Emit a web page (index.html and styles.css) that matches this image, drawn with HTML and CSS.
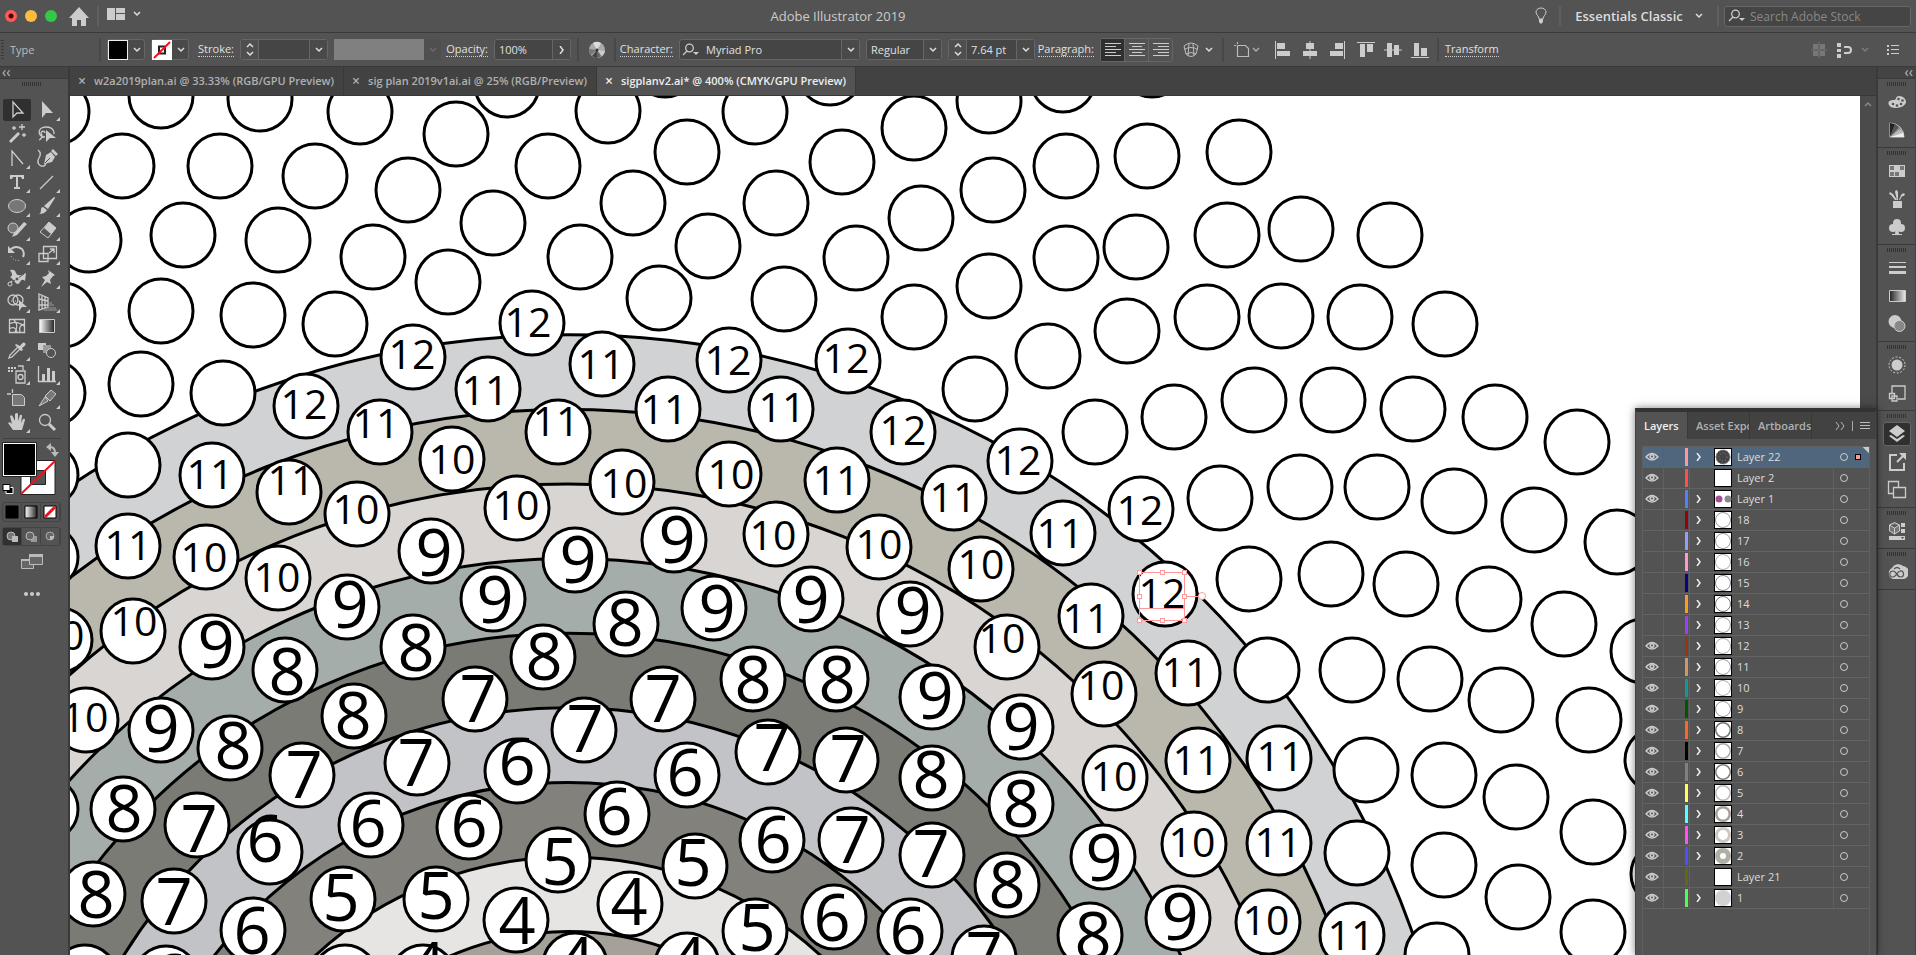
FILE: index.html
```html
<!DOCTYPE html>
<html lang="en">

<head>
    <meta charset="UTF-8">
    <meta name="viewport" content="width=device-width, initial-scale=1.0">
    <title>Adobe Illustrator 2019</title>
    <link rel="stylesheet" href="styles.css">
</head>

<body>
    <svg class="defs" width="0" height="0">
        <defs>
            <symbol id="down" viewBox="0 0 8 6"><path d="M1 1l3 3 3-3" fill="none" stroke="currentColor" stroke-width="1.5" /></symbol>
            <symbol id="up" viewBox="0 0 8 6"><path d="M1 5l3-3 3 3" fill="none" stroke="currentColor" stroke-width="1.5" /></symbol>
            <symbol id="search" viewBox="0 0 18 14"><g fill="none" stroke="currentColor" stroke-width="1.3"><circle cx="7.5" cy="5" r="3.8" /><path d="M5 8L1 12" /></g><path d="M11 9h6l-3 3z" fill="currentColor" /></symbol>
            <symbol id="eye" viewBox="0 0 14 10"><path d="M1 5q6-7 12 0q-6 6-12 0z" fill="none" stroke="currentColor" stroke-width="1.3" /><circle cx="7" cy="4.5" r="2.6" fill="currentColor" /><circle cx="7" cy="4.5" r="1" fill="#535353" /></symbol>
            <linearGradient id="fade"><stop offset="0" stop-color="#222" /><stop offset="1" stop-color="#eee" /></linearGradient>
            <linearGradient id="fade2"><stop offset="0" stop-color="#fff" /><stop offset="1" stop-color="#222" /></linearGradient>
        </defs>
    </svg>

    <header class="titlebar">
        <div class="lights"><i class="red"></i><i class="yellow"></i><i class="green"></i></div>
        <button class="home" aria-label="Home"><svg width="20" height="19"><path d="M10 0L0 11h3v8h5v-6h4v6h5v-8h3z" /></svg></button>
        <span class="sep"></span>
        <button class="arrange" aria-label="Arrange documents"><svg width="18" height="12"><path d="M0 0h8v12H0zM9 0h9v5H9zM9 6h9v6H9z" /></svg><svg class="chev"><use href="#down" /></svg></button>
        <h1>Adobe Illustrator 2019</h1>
        <button class="bulb" aria-label="Learn"><svg width="12" height="18"><path d="M4 12C4 9 1 8 1 5a5 4 0 0 1 10 0c0 3-3 4-3 7z" fill="none" stroke="#ccc" /><path d="M4 12h4v3l-2 2-2-2z" /></svg></button>
        <span class="sep"></span>
        <button class="workspace">Essentials Classic <svg class="chev"><use href="#down" /></svg></button>
        <span class="sep"></span>
        <label class="stock"><svg width="18" height="14"><use href="#search" /></svg><input type="text" placeholder="Search Adobe Stock" aria-label="Search Adobe Stock"></label>
    </header>

    <div class="control">
        <span class="vgrip"></span>
        <span class="kind">Type</span>
        <span class="sep"></span>
        <button class="swatch" aria-label="Fill"><i class="black"></i><svg class="chev"><use href="#down" /></svg></button>
        <button class="swatch" aria-label="Stroke colour"><svg width="20" height="20"><path d="M0 0h20v20H0z" fill="#fff" /><path d="M7 6.5h6v7H7z" fill="none" stroke="#222" stroke-width="2" /><path d="M2 18L18 2" stroke="#f01020" stroke-width="2" /></svg><svg class="chev"><use href="#down" /></svg></button>
        <label class="name w39" for="stroke"><span>Stroke:</span></label>
        <div class="box w88"><span class="step"><svg class="chev"><use href="#up" /></svg><svg class="chev"><use href="#down" /></svg></span><input id="stroke" type="text"><button aria-label="Stroke weights"><svg class="chev"><use href="#down" /></svg></button></div>
        <div class="profile"><i></i><svg class="chev"><use href="#down" /></svg></div>
        <label class="name w41" for="opacity"><span>Opacity:</span></label>
        <div class="box w77"><input id="opacity" type="text" value="100%"><button aria-label="Opacity slider"><svg width="6" height="8"><path d="M1 0l3 4-3 4" fill="none" stroke="#ddd" stroke-width="1.5" /></svg></button></div>
        <span class="sep"></span>
        <button class="wheel" aria-label="Recolor"><svg width="18" height="18"><circle cx="9" cy="9" r="8" fill="#aaa" /><path d="M9 9L5 2a8 8 0 0 1 8 0z" fill="#ddd" /><path d="M9 9L1 8a8 8 0 0 0 2 6z" fill="#777" /><path d="M9 9l8 1a8 8 0 0 1-3 5z" fill="#ccc" /><path d="M9 9l-5 6a8 8 0 0 0 5 2z" fill="#444" /><path d="M9 9v8a8 8 0 0 0 4-2z" fill="#666" /><circle cx="9" cy="9" r="1.5" fill="#333" /></svg></button>
        <span class="sep"></span>
        <label class="name w51" for="font"><span>Character:</span></label>
        <div class="box w181"><svg class="lens" width="18" height="14"><use href="#search" /></svg><select id="font"><option>Myriad Pro</option></select><span class="drop"><svg class="chev"><use href="#down" /></svg></span></div>
        <div class="box w76"><select aria-label="Font style"><option>Regular</option></select><span class="drop"><svg class="chev"><use href="#down" /></svg></span></div>
        <div class="box w87"><span class="step"><svg class="chev"><use href="#up" /></svg><svg class="chev"><use href="#down" /></svg></span><input type="text" value="7.64 pt" aria-label="Font size"><button aria-label="Font sizes"><svg class="chev"><use href="#down" /></svg></button></div>
        <span class="name w53"><span>Paragraph:</span></span>
        <div class="aligntext">
            <button class="on" aria-label="Align left"><svg width="16" height="14"><path d="M0 .5h16M0 3.5h11M0 6.5h16M0 9.5h11M0 12.5h16" /></svg></button>
            <button aria-label="Align center"><svg width="16" height="14"><path d="M0 .5h16M3 3.5h10M0 6.5h16M3 9.5h10M0 12.5h16" /></svg></button>
            <button aria-label="Align right"><svg width="16" height="14"><path d="M0 .5h16M5 3.5h11M0 6.5h16M5 9.5h11M0 12.5h16" /></svg></button>
        </div>
        <button class="warp" aria-label="Envelope"><svg width="16" height="16"><path d="M1 4q7-6 14 0l-2 8q-5 5-10 0zM1 7.5q7-4 14 0M3 12q5-3 10 0M6 1l-1 13M10 1l1 13" fill="none" stroke="#bbb" /></svg><svg class="chev"><use href="#down" /></svg></button>
        <span class="sep"></span>
        <button class="page" aria-label="Document"><svg width="16" height="16"><path d="M3.500 3.500h8l3 3v8h-11zM0 3.500h2M3.500 0v2" fill="none" stroke="#bbb" stroke-width="1.2" /></svg><svg class="chev"><use href="#down" /></svg></button>
        <div class="aligns">
            <button aria-label="Left"><svg width="18" height="18"><path d="M1 0h1v18H1zM3 2h8v6H3zM3 10h13v5H3z" /></svg></button>
            <button aria-label="Center"><svg width="18" height="18"><path d="M8.500 0h1v18h-1zM5 2h8v6H5zM2 10h14v5H2z" /></svg></button>
            <button aria-label="Right"><svg width="18" height="18"><path d="M16 0h1v18h-1zM7 2h8v6H7zM2 10h13v5H2z" /></svg></button>
            <button aria-label="Top"><svg width="18" height="18"><path d="M0 1h18v1H0zM3 3h5v13H3zM10 3h6v8h-6z" /></svg></button>
            <button aria-label="Middle"><svg width="18" height="18"><path d="M0 8.500h18v1H0zM3 2h5v14H3zM10 4h5v10h-5z" /></svg></button>
            <button aria-label="Bottom"><svg width="18" height="18"><path d="M0 16h18v1H0zM3 2h5v13H3zM10 7h6v8h-6z" /></svg></button>
        </div>
        <span class="sep"></span>
        <span class="name"><span>Transform</span></span>
        <span class="push"></span>
        <button class="dim" aria-label="Isolate"><svg width="16" height="16"><path d="M2 2h5v5H2zM9 2h5v5H9zM2 9h5v5H2zM9 9h5v5H9zM7.500 0h1v16h-1zM0 7.500h16v1H0z" /></svg></button>
        <button class="snap" aria-label="Snap"><svg width="16" height="16"><path d="M0 1h4v4H0zM0 7h4v3H0zM0 12h4v4H0z" /><path d="M7 5h4a3 3 0 0 1 0 6H7" fill="none" stroke="#ccc" stroke-width="2" /></svg><svg class="chev dim"><use href="#down" /></svg></button>
        <button class="more" aria-label="Menu"><svg width="12" height="10"><path d="M0 0h2v2H0zM0 4h2v2H0zM0 8h2v2H0zM4 0h8v1H4zM4 4h8v1H4zM4 8h8v1H4z" /></svg></button>
    </div>

    <div class="work">
        <aside class="tools">
            <div class="collapse">‹‹</div>
            <span class="hgrip"></span>
            <div class="toolgrid" id="toolgrid"></div>
            <svg class="paint" width="60" height="58">
                <path d="M1 .5h58" stroke="#404040" />
                <path d="M19 22.500h34v34H19z" fill="#fff" stroke="#222" />
                <path d="M28.500 32.500h15v14h-15z" fill="#535353" stroke="#222" />
                <path d="M19 56l34-33" stroke="#f01020" stroke-width="2" />
                <path d="M.5 4.500h34v34H.5z" fill="#fff" stroke="#222" />
                <path d="M2 6h31v31H2z" fill="#000" />
                <path d="M48 9q5 0 5 6" fill="none" stroke="#bbb" stroke-width="2" />
                <path d="M49 5v8l-5-4zM49 14h8l-4 5z" fill="#bbb" />
                <path d="M4 49.500h7v6H4z" fill="#000" stroke="#fff" />
                <path d="M1 46.500h7v6H1z" fill="#fff" stroke="#000" />
            </svg>
            <div class="modes">
                <button aria-label="Color"><svg width="14" height="14"><path d="M.5.5h13v13H.5z" fill="#000" /></svg></button>
                <button aria-label="Gradient"><svg width="14" height="14"><path d="M1 1h12v12H1z" fill="url(#fade2)" stroke="#000" /></svg></button>
                <button aria-label="None"><svg width="14" height="14"><path d="M1 1h12v12H1z" fill="#fff" stroke="#000" /><path d="M2 12L12 2" stroke="#f01020" stroke-width="3" /></svg></button>
            </div>
            <div class="modes draw">
                <button class="on" aria-label="Draw normal"><svg width="14" height="14"><circle cx="6" cy="6" r="4" fill="#777" stroke="#bbb" /><path d="M7 6h6v6H7z" fill="#bbb" /></svg></button>
                <button aria-label="Draw behind"><svg width="14" height="14"><path d="M7 6h6v6H7z" fill="#999" /><circle cx="6" cy="6" r="4" fill="#666" stroke="#bbb" /></svg></button>
                <button aria-label="Draw inside"><svg width="14" height="14"><circle cx="7" cy="6" r="4" fill="#666" stroke="#aaa" /><path d="M7 6h4q0 4-4 4z" fill="#bbb" /></svg></button>
            </div>
            <button class="screen" aria-label="Screen mode"><svg width="22" height="16"><g fill="#666" stroke="#bbb"><path d="M.5 5.500h12v9H.5z" /><path d="M8.500.5h13v10h-13z" /></g><path d="M8 0h14v3H8zM0 5h8v2H0z" fill="#bbb" /></svg></button>
            <button class="dots" aria-label="Edit toolbar"><i></i><i></i><i></i></button>
        </aside>

        <main class="doc">
            <nav class="tabs">
                <div class="tab"><button aria-label="Close">×</button><a href="#w2a">w2a2019plan.ai @ 33.33% (RGB/GPU Preview)</a></div>
                <div class="tab"><button aria-label="Close">×</button><a href="#sig">sig plan 2019v1ai.ai @ 25% (RGB/Preview)</a></div>
                <div class="tab active"><button aria-label="Close">×</button><a href="#sigplan">sigplanv2.ai* @ 400% (CMYK/GPU Preview)</a></div>
            </nav>
            <div class="stage">
                <svg class="artboard" id="artboard"></svg>
                <div class="scroll"><svg class="chev"><use href="#up" /></svg></div>
            </div>
        </main>

        <aside class="dock">
            <div class="collapse">‹‹</div>
            <div class="group">
                <span class="hgrip"></span>
                <button aria-label="Color"><svg width="20" height="20"><path d="M2 13C0 9 4 8 7 8s1-4 5-4 7 3 7 6-5 6-10 6c-4 0-6-1-7-3z" /><g fill="#535353"><circle cx="6" cy="12" r="1.3" /><circle cx="10" cy="13.5" r="1.3" /><circle cx="14" cy="12" r="1.3" /><circle cx="15.5" cy="8.5" r="1.3" /><circle cx="11.5" cy="7" r="1.3" /></g></svg></button>
                <button aria-label="Color guide"><svg width="20" height="20"><path d="M3 3v14h14A14 14 0 0 0 3 3z" fill="#888" stroke="#ccc" /><path d="M3 17V3l5 1z" fill="#222" /><path d="M3 17L8 4l4 3z" fill="#555" /><path d="M3 17l13-5 1 5z" fill="#eee" /><path d="M3 17l10-8 3 4z" fill="#bbb" /></svg></button>
            </div>
            <div class="group">
                <span class="hgrip"></span>
                <button aria-label="Swatches"><svg width="20" height="20"><path d="M2 4h16v12H2z" /><path d="M3 5h4v4H3zM13 5h4v4h-4zM3 11h4v4H3zM8 11h4v4H8z" fill="#777" /></svg></button>
                <button aria-label="Brushes"><svg width="20" height="20"><path d="M6 12h9v7H6zM8 11L4 6l-2-1 1-2 3 2 4 6zM10 11L8 3q1-4 3 0v8zM12 11l2-5q2-3 4-1-1 3-3 2l-2 4z" /></svg></button>
                <button aria-label="Symbols"><svg width="20" height="20"><circle cx="10" cy="6" r="4" /><circle cx="6" cy="11" r="4" /><circle cx="14" cy="11" r="4" /><path d="M9 9h2l1 8h3v1H5v-1h3z" /></svg></button>
            </div>
            <div class="group">
                <span class="hgrip"></span>
                <button aria-label="Stroke"><svg width="20" height="20"><path d="M2 4h17v1H2zM2 8h17v2H2zM2 13h17v3H2z" /></svg></button>
                <button aria-label="Gradient"><svg width="20" height="20"><path d="M2.500 4.500h16v11h-16z" fill="url(#fade)" stroke="#ccc" /></svg></button>
                <button aria-label="Transparency"><svg width="20" height="20"><circle cx="8" cy="7.5" r="6.5" /><circle cx="12.5" cy="12" r="5.5" fill="#888" stroke="#ccc" /></svg></button>
            </div>
            <div class="group">
                <span class="hgrip"></span>
                <button aria-label="Appearance"><svg width="20" height="20"><circle cx="10" cy="10" r="5.5" /><circle cx="10" cy="10" r="8" fill="none" stroke="#ccc" stroke-dasharray="2 1.600" /></svg></button>
                <button aria-label="Graphic styles"><svg width="20" height="20"><path d="M5 10V3h13v13h-7M2.500 10.500h5v5h-5zM5 13h5v5H5z" fill="none" stroke="#ccc" stroke-width="1.3" /></svg></button>
            </div>
            <div class="group">
                <span class="hgrip"></span>
                <button class="on" aria-label="Layers"><svg width="20" height="20"><path d="M10 1l8 6-8 6-8-6zM4 11l6 4 6-4 2 1-8 6-8-6z" /></svg></button>
                <button aria-label="Asset export"><svg width="20" height="20"><path d="M10 3H3v15h14v-7M10 10l7-7" fill="none" stroke="#ccc" stroke-width="2" /><path d="M12 1h7v7z" /></svg></button>
                <button aria-label="Artboards"><svg width="20" height="20"><path d="M6 13.500H1.500v-12h10V7M6.500 7.500h12v10h-12z" fill="none" stroke="#ccc" stroke-width="1.3" /></svg></button>
            </div>
            <div class="group">
                <span class="hgrip"></span>
                <button aria-label="Libraries"><svg width="20" height="20"><path d="M2.500 4l5-2.500 5 2.500v6l-5 3-5-3zM2.500 4l5 3 5-3M7.500 7v6" fill="#777" stroke="#ccc" /><path d="M14 2h4v4h-4zM14 8h4v4h-4zM2 15h16v4H2z" /><path d="M14 16h3l-1.500 2z" fill="#444" /></svg></button>
            </div>
            <div class="group">
                <span class="hgrip"></span>
                <button aria-label="Creative Cloud"><svg width="22" height="20"><path d="M7 17a6 6 0 0 1-1-11 7 7 0 0 1 11-2 6.500 6.500 0 0 1-1 13z" fill="#ccc" /><path d="M12 13L9 10a3 3 0 1 0-2 5c3 0 4-5 7-6a3 3 0 1 1 1 6c-2 0-3-1-4-2M8 7q3-3 6 0" fill="none" stroke="#555" stroke-width="1.2" /></svg></button>
            </div>
            <div class="group"></div>
        </aside>

        <section class="layers">
            <div class="ptabs">
                <button class="on">Layers</button>
                <button>Asset Export</button>
                <button>Artboards</button>
                <span class="tail"><svg width="10" height="8"><path d="M1 0l3 4-3 4M6 0l3 4-3 4" /></svg><i></i><svg width="10" height="8"><path d="M0 .5h10M0 3.500h10M0 6.500h10" /></svg></span>
            </div>
            <ul id="layerlist"></ul>
        </section>
    </div>
    <script src="script.js"></script>
</body>

</html>
```
FILE: styles.css
```css
* {
    box-sizing: border-box;
}

body {
    margin: 0;
    height: 100vh;
    display: flex;
    flex-direction: column;
    overflow: hidden;
    background-color: #535353;
    color: #ddd;
    font-family: "Open Sans", "Noto Sans", sans-serif;
    font-size: 11px;
}

button,
input,
select {
    font: inherit;
    color: inherit;
    background: none;
    border: none;
    padding: 0;
    margin: 0;
    outline: none;
    appearance: none;
}

button {
    display: flex;
    align-items: center;
    justify-content: center;
}

svg {
    display: block;
    flex: none;
    fill: #ccc;
}

.defs {
    position: absolute;
}

.chev {
    width: 8px;
    height: 6px;
    color: #ddd;
}

.dim {
    opacity: 0.3;
}

.sep {
    width: 2px;
    height: 24px;
    background-color: #484848;
    flex: none;
}

/* Title bar */
.titlebar {
    height: 33px;
    flex: none;
    display: flex;
    align-items: center;
    padding: 0 5px;
    border-bottom: 1px solid #3a3a3a;
}

.titlebar .sep {
    height: 20px;
    background-color: #5f5f5f;
}

.lights {
    display: flex;
    gap: 8px;
}

.lights i {
    width: 12px;
    height: 12px;
    border-radius: 50%;
}

.red {
    background: radial-gradient(circle, #4d0000 2px, #fc5b57 3px);
}

.yellow {
    background-color: #fdbc40;
}

.green {
    background-color: #34c84a;
}

.home {
    margin: 0 8px 0 12px;
}

.arrange {
    gap: 8px;
    margin-left: 8px;
    margin-bottom: 4px;
}

.titlebar h1 {
    flex: 1;
    margin: 0;
    text-align: center;
    font-size: 13px;
    font-weight: normal;
    color: #ccc;
}

.bulb {
    margin-right: 12px;
}

.workspace {
    gap: 12px;
    width: 156px;
    font-size: 13px;
    font-weight: 600;
    white-space: nowrap;
}

.stock {
    display: flex;
    align-items: center;
    gap: 4px;
    width: 187px;
    height: 21px;
    margin-left: 5px;
    padding-left: 3px;
    border: 1px solid #666;
    border-radius: 3px;
    background-color: #454545;
    color: #ccc;
}

.stock input {
    width: 100%;
    font-size: 12px;
}

.stock input::placeholder {
    color: #888;
}

/* Control bar */
.control {
    height: 34px;
    flex: none;
    display: flex;
    align-items: center;
    gap: 6px;
    padding: 0 17px 0 1px;
    border-bottom: 1px solid #3a3a3a;
}

.vgrip {
    width: 3px;
    height: 20px;
    background: repeating-linear-gradient(#3a3a3a 0 1px, #535353 1px 3px);
}

.kind {
    width: 83px;
    color: #bbb;
}

.swatch {
    width: 38px;
    height: 21px;
    justify-content: flex-start;
    gap: 5px;
    border: 1px solid #666;
    border-radius: 3px;
    background-color: #4a4a4a;
}

.black {
    width: 20px;
    height: 20px;
    background-color: #000;
    border: 1px solid #eee;
}

.name {
    flex: none;
    display: flex;
    justify-content: flex-end;
    white-space: nowrap;
    color: #e0e0e0;
}

.name span {
    line-height: 14px;
    border-bottom: 1px dotted #ccc;
}

.w39 {
    width: 39px;
}

.w41 {
    width: 41px;
}

.w51 {
    width: 51px;
}

.w53 {
    width: 53px;
}

.box {
    flex: none;
    display: flex;
    height: 21px;
    border: 1px solid #666;
    border-radius: 3px;
    background-color: #454545;
    align-items: stretch;
}

.box input,
.box select {
    flex: 1;
    min-width: 0;
    padding-left: 4px;
    color: #e0e0e0;
}

.box button,
.drop {
    width: 18px;
    display: flex;
    align-items: center;
    justify-content: center;
    border-left: 1px solid #666;
    background-color: #4a4a4a;
}

.step {
    width: 18px;
    display: flex;
    flex-direction: column;
    align-items: center;
    justify-content: space-evenly;
    border-right: 1px solid #666;
    background-color: #4f4f4f;
}

.lens {
    align-self: center;
    color: #ccc;
    margin: 0 2px;
}

.w88 {
    width: 88px;
}

.w77 {
    width: 77px;
}

.w181 {
    width: 181px;
}

.w76 {
    width: 76px;
}

.w87 {
    width: 87px;
}

.profile {
    width: 107px;
    height: 21px;
    display: flex;
    align-items: center;
    gap: 5px;
    background-color: #4f4f4f;
}

.profile i {
    width: 90px;
    height: 21px;
    background-color: #808080;
}

.profile .chev {
    color: #6a6a6a;
}

.wheel {
    width: 23px;
}

.aligntext {
    display: flex;
    width: 73px;
    height: 24px;
    border: 1px solid #666;
    border-radius: 3px;
}

.aligntext button {
    flex: 1;
    border-right: 1px solid #666;
}

.aligntext button:last-child {
    border: none;
}

.aligntext svg {
    stroke: #ccc;
}

.aligntext .on {
    background-color: #303030;
}

.warp {
    width: 37px;
    gap: 6px;
}

.page {
    width: 33px;
    gap: 2px;
}

.page .chev {
    color: #aaa;
}

.aligns {
    display: flex;
    margin-right: -2px;
}

.aligns button {
    width: 27px;
}

.aligns button:nth-child(3) {
    margin-right: 2px;
}

.push {
    flex: 1;
}

.snap {
    gap: 8px;
    margin: 0 12px 0 4px;
}

/* Work area */
.work {
    position: relative;
    flex: 1;
    min-height: 0;
    display: flex;
}

.collapse {
    height: 12px;
    flex: none;
    background-color: #444;
    border-bottom: 1px solid #3a3a3a;
    color: #bbb;
    line-height: 9px;
    font-size: 14px;
    padding: 0 2px;
}

.hgrip {
    width: 20px;
    height: 4px;
    background: repeating-linear-gradient(90deg, #333 0 1px, #535353 1px 2px);
}

.tools {
    width: 70px;
    flex: none;
    display: flex;
    flex-direction: column;
    border-right: 2px solid #3a3a3a;
}

.tools .hgrip {
    margin: 3px 0 13px 22px;
}

.toolgrid {
    display: grid;
    grid-template-columns: 28px 28px;
    column-gap: 2px;
    grid-auto-rows: 24px;
    margin-left: 3px;
}

.toolgrid button {
    position: relative;
    height: 22px;
    border-radius: 2px;
}

.toolgrid .more::after {
    content: "";
    position: absolute;
    right: 1px;
    bottom: 0;
    border-left: 4px solid transparent;
    border-bottom: 4px solid #ccc;
}

.on {
    background-color: #303030;
}

.paint {
    margin: 3px 0 6px 2px;
}

.modes {
    display: flex;
    width: 59px;
    height: 20px;
    margin-left: 2px;
    border: 1px solid #444;
    border-radius: 3px;
}

.modes button {
    flex: 1;
    border-right: 1px solid #444;
}

.modes.draw {
    height: 19px;
    margin-top: 5px;
}

.screen {
    margin: 8px 25px 0 21px;
}

.dots {
    gap: 2px;
    margin: 22px 4px 0 0;
}

.dots i {
    width: 4px;
    height: 4px;
    border-radius: 50%;
    background-color: #ccc;
}

.doc {
    flex: 1;
    min-width: 0;
    display: flex;
    flex-direction: column;
    border-right: 2px solid #3a3a3a;
}

.tabs {
    height: 29px;
    flex: none;
    display: flex;
    background-color: #424242;
    border-bottom: 1px solid #383838;
}

.tab {
    display: flex;
    align-items: center;
    gap: 8px;
    padding: 0 9px 1px 8px;
    border-right: 1px solid #383838;
    color: #b0b0b0;
    font-weight: 600;
    white-space: nowrap;
}

.tab a {
    color: inherit;
    text-decoration: none;
}

.tab button {
    font-size: 14px;
    line-height: 14px;
}

.tab.active {
    background-color: #535353;
    color: #eee;
}

.stage {
    flex: 1;
    min-height: 0;
    display: flex;
}

.artboard {
    flex: 1;
    min-width: 0;
    height: 100%;
    background-color: #fff;
}

.artboard .ring,
.artboard .pin {
    stroke: #000;
    stroke-width: 3px;
}

.artboard .pin {
    fill: #fff;
}

.artboard text {
    fill: #000;
    font-size: 65px;
    text-anchor: middle;
}

.artboard .two {
    font-size: 41px;
}

.artboard .select {
    fill: none;
    stroke: #f99;
}

.artboard .handle {
    fill: #fff;
    stroke: #f99;
}

.scroll {
    width: 16px;
    background-color: #4b4b4b;
    padding: 5px 4px;
}

.scroll .chev {
    color: #888;
}

/* Right dock */
.dock {
    width: 38px;
    flex: none;
    background-color: #535353;
    border-right: 1px solid #424242;
}

.dock .collapse {
    text-align: right;
}

.group {
    display: flex;
    flex-direction: column;
    align-items: center;
    padding: 3px 0;
    border-bottom: 1px solid #3a3a3a;
}

.group:last-child {
    border: none;
}

.group .hgrip {
    margin-bottom: 2px;
}

.group button {
    width: 28px;
    height: 24px;
    margin: 2px 0;
    border-radius: 3px;
}

.group .on {
    border: 1px solid #666;
}

/* Floating layers panel */
.layers {
    position: absolute;
    right: 39px;
    top: 341px;
    bottom: 0;
    width: 242px;
    display: flex;
    flex-direction: column;
    background-color: #535353;
    border-top: 4px solid #333;
    border-left: 1px solid #444;
    border-right: 1px solid #3a3a3a;
    box-shadow: 0 0 8px rgba(0, 0, 0, 0.5);
}

.ptabs {
    display: flex;
    flex: none;
    height: 27px;
    background-color: #424242;
}

.ptabs button {
    width: 62px;
    padding-left: 8px;
    justify-content: flex-start;
    overflow: hidden;
    white-space: nowrap;
    border-right: 1px solid #383838;
    color: #b0b0b0;
    font-weight: 600;
}

.ptabs .on {
    width: 52px;
    background-color: #535353;
    color: #eee;
}

.tail {
    flex: 1;
    display: flex;
    align-items: center;
    justify-content: flex-end;
    gap: 7px;
    padding-right: 6px;
}

.tail svg {
    fill: none;
    stroke: #bbb;
}

.tail i {
    width: 1px;
    height: 10px;
    background-color: #aaa;
}

.layers ul {
    flex: 1;
    list-style: none;
    margin: 7px 6px 0 6px;
    padding: 0;
    border: 1px solid #606060;
    border-bottom: none;
}

.layers li {
    height: 21px;
    display: flex;
    align-items: stretch;
    border-bottom: 1px solid #636363;
}

.layers li button {
    color: #ccc;
}

.layers li > * {
    border-right: 1px solid #606060;
}

.seen {
    width: 21px;
}

.layers li .seen {
    padding-right: 2px;
}

.lock {
    width: 26px;
    padding: 1px 1px 1px 21px;
}

.lock i {
    display: block;
    height: 18px;
}

.open {
    width: 24px;
}

.layers li .open {
    justify-content: flex-start;
    padding-left: 6px;
}

.layers li .open,
.layers li .thumb,
.layers li .target {
    border: none;
}

.thumb {
    width: 18px;
    height: 18px;
    margin-top: 1px;
}

.title {
    flex: 1;
    padding-left: 5px;
    line-height: 20px;
    color: #ddd;
}

.target {
    width: 35px;
    display: flex;
    align-items: center;
    gap: 7px;
    padding-left: 6px;
}

.circle {
    width: 8px;
    height: 8px;
    border: 1px solid #ccc;
    border-radius: 50%;
}

.picked {
    width: 6px;
    height: 6px;
    background-color: #f99;
    border: 1px solid #000;
}

.layers .current {
    background: linear-gradient(225deg, #ccc 4px, #50667c 5px);
}
```
FILE: script.js
```js
// concentric rings, outermost first
const ringColors = ["#d0d2d4", "#bab8ad", "#d9d5d2", "#a5adab", "#7b7b75", "#c2c3c6", "#83817b", "#e6e5e4", "#a5a099"];
const center = { x: 498, y: 1134 };
const ringStep = 74.6;

const blanks = [
    [-13, 16], [91, 0], [190, 3], [290, 16], [386, 38], [437, -11], [538, 15], [595, -31], [685, 16], [760, -23],
    [52, 70], [150, 70], [245, 80], [338, 94], [478, 70], [617, 56], [772, 66], [19, 144], [113, 139], [208, 144],
    [303, 161], [423, 127], [563, 107], [510, 161], [378, 186], [638, 150], [706, 107], [-7, 219], [91, 215],
    [183, 219], [265, 228], [589, 202], [714, 203], [786, 162], [-17, 297], [71, 288], [153, 297], [58, 369],
    [-24, 379], [-24, 461], [-24, 713], [844, 32], [919, 5], [993, -16], [1082, -31], [923, 94], [996, 70],
    [1077, 60], [1169, 56], [851, 122], [996, 162], [1066, 151], [919, 190], [1157, 139], [1231, 133], [1320, 139],
    [844, 221], [1057, 235], [978, 260], [1137, 221], [1211, 220], [1290, 221], [1375, 228], [905, 293],
    [1025, 336], [1104, 321], [1184, 304], [1263, 304], [1343, 313], [1425, 321], [1507, 346], [1150, 402],
    [1230, 391], [1307, 391], [1384, 405], [1464, 424], [1547, 446], [1179, 483], [1261, 478], [1336, 488],
    [1419, 503], [1494, 528], [1573, 555], [1197, 574], [1282, 574], [1360, 583], [1431, 604], [1519, 624],
    [1587, 664], [1296, 674], [1374, 679], [1446, 701], [1523, 736], [1593, 778], [1287, 757], [1374, 769],
    [1448, 801], [1523, 836], [1367, 859], [1591, 880], [275, 881], [15, 881]
];

// circle x, circle y, label, label x, label baseline
const pins = [
    [462, 227, 12, 458, 241], [343, 261, 12, 342, 273], [532, 268, 11, 531, 283], [659, 264, 12, 658, 279],
    [418, 293, 11, 415, 309], [598, 313, 11, 594, 328], [711, 313, 11, 712, 326], [236, 310, 12, 234, 323],
    [310, 336, 11, 306, 342], [488, 336, 11, 486, 340], [142, 379, 11, 140, 393], [219, 396, 11, 221, 399],
    [382, 363, 10, 382, 378], [552, 386, 10, 554, 402], [659, 378, 10, 661, 393], [287, 418, 10, 286, 428],
    [447, 412, 10, 446, 424], [778, 265, 12, 776, 277], [833, 336, 12, 833, 349], [950, 365, 12, 948, 379],
    [767, 384, 11, 766, 399], [884, 402, 11, 883, 416], [1071, 413, 12, 1070, 429], [993, 437, 11, 990, 452],
    [58, 450, 11, 58, 464], [136, 461, 10, 134, 476], [208, 482, 10, 207, 496], [63, 535, 10, 64, 540],
    [-10, 544, 10, -9, 554], [16, 624, 10, 15, 636], [706, 438, 10, 703, 454], [361, 455, 9, 364, 480],
    [505, 464, 9, 508, 487], [604, 444, 9, 607, 467], [277, 511, 9, 280, 532], [423, 503, 9, 425, 527],
    [644, 512, 9, 647, 536], [741, 503, 9, 741, 527], [142, 551, 9, 146, 572], [91, 634, 9, 91, 656],
    [215, 574, 8, 217, 599], [343, 551, 8, 346, 575], [473, 561, 8, 474, 584], [556, 528, 8, 555, 550],
    [284, 620, 8, 283, 643], [160, 652, 8, 163, 673], [683, 583, 8, 683, 607], [766, 583, 8, 767, 607],
    [53, 713, 8, 54, 736], [23, 798, 8, 26, 822], [405, 603, 7, 408, 626], [593, 603, 7, 593, 626],
    [514, 634, 7, 515, 656], [232, 679, 7, 234, 702], [347, 667, 7, 346, 690], [698, 656, 7, 702, 675],
    [776, 664, 7, 778, 686], [127, 729, 7, 129, 756], [104, 805, 7, 104, 829], [447, 675, 6, 447, 689],
    [547, 718, 6, 544, 739], [617, 679, 6, 615, 700], [301, 729, 6, 298, 751], [399, 731, 6, 399, 751],
    [200, 756, 6, 195, 766], [183, 834, 6, 182, 858], [702, 744, 6, 703, 767], [764, 821, 6, 762, 845],
    [488, 764, 5, 490, 789], [625, 770, 5, 623, 790], [273, 803, 5, 271, 825], [366, 803, 5, 366, 823],
    [685, 835, 5, 687, 855], [446, 824, 4, 447, 848], [560, 808, 4, 559, 829], [505, 869, 4, 506, 888],
    [617, 869, 4, 618, 888], [353, 881, 4, 357, 893], [96, 882, 6, 99, 905], [809, 451, 10, 809, 463],
    [911, 473, 10, 911, 483], [840, 518, 9, 843, 538], [937, 551, 10, 932, 557], [1021, 520, 11, 1016, 537],
    [1095, 498, 12, 1092, 512], [862, 601, 9, 865, 623], [1034, 598, 10, 1031, 604], [1118, 577, 11, 1115, 591],
    [951, 631, 9, 951, 654], [1128, 664, 11, 1126, 679], [1209, 662, 11, 1210, 675], [862, 682, 8, 861, 702],
    [951, 708, 8, 951, 731], [1045, 682, 10, 1044, 695], [1033, 761, 9, 1034, 785], [1124, 748, 10, 1122, 761],
    [1209, 747, 11, 1208, 761], [781, 744, 7, 782, 767], [862, 759, 7, 861, 781], [937, 789, 8, 937, 812],
    [840, 835, 6, 838, 858], [914, 862, 7, 914, 883], [1020, 839, 8, 1023, 863], [1108, 822, 9, 1110, 844],
    [1198, 826, 10, 1196, 839], [1282, 839, 11, 1281, 854]
];

const handles = [[1069, 476], [1092, 476], [1114, 476], [1069, 500], [1114, 500], [1069, 524], [1092, 524], [1114, 524]];

function drawArtboard() {
    let out = ringColors.map((c, i) =>
        `<circle class="ring" cx="${center.x}" cy="${center.y}" r="${(12 - i) * ringStep}" fill="${c}"/>`).join("");
    out += blanks.map(([x, y]) => `<circle class="pin" cx="${x}" cy="${y}" r="32"/>`).join("");
    out += pins.map(([x, y, n, tx, ty]) =>
        `<circle class="pin" cx="${x}" cy="${y}" r="32"/><text class="${n > 9 ? "two" : "one"}" x="${tx}" y="${ty}">${n}</text>`).join("");
    out += `<path class="select" d="M1069.5 476.5h45v48h-45zM1069.5 512.5h45M1114 500.5h14"/><circle class="handle" cx="1132" cy="500" r="3.5"/>`;
    out += handles.map(([x, y]) => `<rect class="handle" x="${x - 2}.5" y="${y - 2}.5" width="4" height="4"/>`).join("");
    document.querySelector("#artboard").innerHTML = out;
}

// name, color, visible, has children, thumbnail ring color, ring width
const layers = [
    ["Layer 22", "#ff9999", 1, 1, "dense"],
    ["Layer 2", "#ff4f4f", 1, 0, ""],
    ["Layer 1", "#4f80ff", 1, 1, "pair"],
    ["18", "#990007", 0, 1, "#999", 1],
    ["17", "#9999ff", 0, 1, "#999", 1],
    ["16", "#ff99cc", 0, 1, "#aaa", 1],
    ["15", "#000780", 0, 1, "#888", 1],
    ["14", "#ff9922", 0, 1, "#777", 1],
    ["13", "#993fff", 0, 1, "#999", 1],
    ["12", "#993311", 1, 1, "#aaa", 1],
    ["11", "#cc9966", 1, 1, "#999", 1],
    ["10", "#119999", 1, 1, "#aaa", 1],
    ["9", "#005500", 1, 1, "#999", 1],
    ["8", "#ff6622", 1, 1, "#777", 1.5],
    ["7", "#000000", 1, 1, "#aaa", 1.5],
    ["6", "#808080", 1, 1, "#83817b", 1.5],
    ["5", "#ffff55", 1, 1, "#bbb", 1.5],
    ["4", "#55ffff", 1, 1, "#a5a099", 2.5],
    ["3", "#ff4fff", 1, 1, "#ccc8c4", 3],
    ["2", "#4f4fff", 1, 1, "#b0afa5", 5],
    ["Layer 21", "#666611", 1, 0, ""],
    ["1", "#4fff4f", 1, 1, "#d0d2d4", 8]
];

function thumb(kind, w) {
    if (kind === "dense") {
        return `<circle cx="9" cy="9" r="7" fill="#444" stroke="#777" stroke-dasharray="2 1"/><circle cx="9" cy="9" r="4" fill="none" stroke="#888" stroke-dasharray="1 2"/>`;
    }
    if (kind === "pair") {
        return `<circle cx="5" cy="9" r="3.5" fill="#a05090"/><circle cx="14" cy="9" r="3.5" fill="#888"/>`;
    }
    return kind ? `<circle cx="9" cy="9" r="${8 - w / 2}" fill="none" stroke="${kind}" stroke-width="${w}"/>` : "";
}

function drawLayers() {
    document.querySelector("#layerlist").innerHTML = layers.map(([name, color, seen, kids, kind, w], i) =>
        `<li class="${i === 0 ? "current" : ""}">
            <button class="seen" aria-label="Visibility">${seen ? `<svg width="14" height="10"><use href="#eye"/></svg>` : ""}</button>
            <span class="lock"><i style="background-color:${color}"></i></span>
            <button class="open" aria-label="Expand">${kids ? `<svg width="6" height="8"><path d="M1 0l3 4-3 4" fill="none" stroke="#eee" stroke-width="1.5"/></svg>` : ""}</button>
            <svg class="thumb"><rect x=".5" y=".5" width="17" height="17" fill="#fff" stroke="#000"/>${thumb(kind, w)}</svg>
            <span class="title">${name}</span>
            <span class="target"><i class="circle"></i>${i === 0 ? `<i class="picked"></i>` : ""}</span>
        </li>`).join("");
}

const L = `fill="none" stroke="#ccc" stroke-width="1.3"`;
// label, icon, has flyout
const tools = [
    ["Selection", `<path d="M7 3v15l4-4h6z" ${L}/>`, 0],
    ["Direct selection", `<path d="M6 2v17l4-5h7z"/>`, 1],
    ["Magic wand", `<path d="M3 18L12 9l2 2-9 9z"/><path d="M16 1v6M13 4h6M8 3v4M6 5h4M18 10v4M16 12h4" ${L}/>`, 0],
    ["Lasso", `<path d="M9 14C1 14 1 4 10 4s8 7 8 7M9 10a2 2 0 1 0-3 2q0 4-3 5" ${L}/><path d="M10 7v12l4-4h6z"/>`, 0],
    ["Anchor point", `<path d="M6 19V4l11 13" ${L}/>`, 1],
    ["Curvature", `<path d="M2 3q4 3 1 8t2 8q4 1 5-3" ${L}/><path d="M8 17l2-9 5-3 4 5-3 5zM15 4l2-2 5 5-2 2z"/><path d="M9 16l5-5" stroke="#535353"/>`, 0],
    ["Type", `<path d="M4 4h14v4h-2l-1-2h-3v10h2v2H8v-2h2V6H7L6 8H4z"/>`, 1],
    ["Line", `<path d="M4 18L17 5" ${L}/>`, 1],
    ["Ellipse", `<ellipse cx="11" cy="11" rx="8.500" ry="6.500" fill="#777" stroke="#ccc"/>`, 1],
    ["Paintbrush", `<path d="M19 3l-7 11-4-3 9-8q2-2 2 0zM7 12l4 3q-2 4-8 4 2-1 2-4t2-3z"/>`, 1],
    ["Shaper", `<circle cx="7" cy="9" r="5" fill="#777" stroke="#ccc"/><path d="M21 5L11 16l-5 2 2-4L18 3z"/>`, 1],
    ["Eraser", `<path d="M13 3l7 6-8 10-8-6z" fill="#555" stroke="#ccc"/><path d="M13 3l7 6-5 6-7-6z"/>`, 1],
    ["Rotate", `<path d="M5 6q5-4 11 0 3 4 1 8" fill="none" stroke="#ccc" stroke-width="2"/><path d="M2 3v7h7z"/><path d="M5 13q3 6 10 4" fill="none" stroke="#ccc" stroke-dasharray="1 2"/>`, 1],
    ["Scale", `<path d="M7.500 3.500h13v12h-13zM3 10.500h9v8H3zM13 10l5-4M14 6h4v4" ${L}/>`, 1],
    ["Width", `<path d="M4 3q5-1 6 3t8 1l2-1-1 8q-3-3-5 1t-5 0-5-5q4-1 0-7z"/><path d="M3 17L18 7" stroke="#535353"/><path d="M2 18l4-4" ${L}/><circle cx="4" cy="17" r="2" fill="#535353" stroke="#ccc"/><circle cx="11" cy="12" r="2" fill="#535353" stroke="#ccc"/>`, 1],
    ["Puppet warp", `<path d="M12 3l7 5-2 1-3 4 1 4-4-2-6 5 4-7-3-3 4-1 3-3z"/>`, 1],
    ["Shape builder", `<circle cx="7" cy="9" r="5" ${L}/><circle cx="12" cy="9" r="5" ${L}/><path d="M5 10h8" stroke="#ccc" stroke-dasharray="1 1"/><path d="M13 9v11l3-4h5z"/>`, 1],
    ["Perspective grid", `<path d="M3 3l9 4v9l-9 3zM3 8l9 2M3 14h9M6 4v14M9 6v11" ${L}/><path d="M13 12h3M13 14h5M10 17h10M8 19h13" stroke="#999"/>`, 1],
    ["Mesh", `<path d="M3.500 4.500h15v13h-15zM3 9q7-4 15 2M3 14q6-4 8 3M8 5q5 5 1 12M18 9q-6 2-4 8" ${L}/>`, 0],
    ["Gradient", `<path d="M3.500 4.500h15v13h-15z" fill="url(#fade2)" stroke="#ccc"/>`, 0],
    ["Eyedropper", `<path d="M14 7q3-5 5-3t-3 5l1 2-2 1-6-6 1-1z"/><path d="M12 8l-8 8-1 3 3-1 8-8" ${L}/>`, 1],
    ["Blend", `<path d="M2 4h8v7H2z"/><path d="M7 6h8v8H7z" fill="#999"/><circle cx="15" cy="14" r="4.5" fill="#535353" stroke="#ccc"/>`, 0],
    ["Symbol sprayer", `<path d="M10 8h9v12h-9zM12 3h5v4" ${L}/><circle cx="14.5" cy="14" r="2.5" ${L}/><path d="M2 4h2v2H2zM5 4h2v2H5zM8 4h2v2H8zM2 7h2v2H2zM5 7h2v2H5z"/>`, 1],
    ["Graph", `<path d="M2.500 3v15.500H20" ${L}/><path d="M6 11h3v7H6zM11 5h3v13h-3zM16 8h3v10h-3z"/>`, 1],
    ["Artboard", `<path d="M6.500 7.500h9l3 3v8h-12z" fill="#777" stroke="#ccc"/><path d="M1 7h4M6.500 2v4" ${L}/>`, 0],
    ["Slice", `<path d="M3 19l6-9 3 4zM9 9l6-6 5 4-6 7z" fill="#777" stroke="#ccc"/>`, 1],
    ["Hand", `<path d="M7 19l-5-7q2-2 4 1L4 5q2-2 3 1l2 4V3q2-2 3 0v7l2-6q2-1 2 1l-1 7 2-4q2-1 2 1l-3 10z"/>`, 1],
    ["Zoom", `<circle cx="9" cy="9" r="5.5" ${L}/><path d="M13 13l6 6" stroke="#ccc" stroke-width="3"/>`, 0]
];

function drawTools() {
    document.querySelector("#toolgrid").innerHTML = tools.map(([label, icon, fly], i) =>
        `<button class="${i === 0 ? "on" : ""} ${fly ? "more" : ""}" aria-label="${label}"><svg width="22" height="22">${icon}</svg></button>`).join("");
}

drawArtboard();
drawLayers();
drawTools();
```
